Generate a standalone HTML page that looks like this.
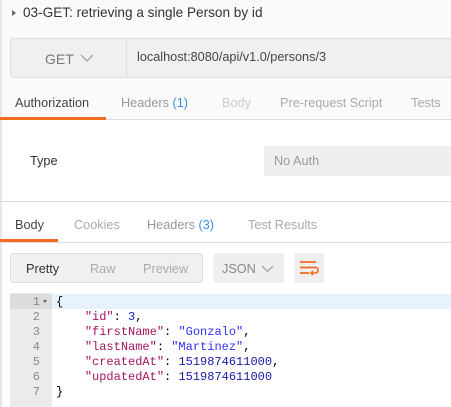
<!DOCTYPE html>
<html><head><style>
*{margin:0;padding:0;box-sizing:border-box}
body{width:451px;height:407px;overflow:hidden;background:#fff;font-family:"Liberation Sans",sans-serif;position:relative;color:#333}
.a{position:absolute;white-space:nowrap}
.mono{font-family:"Liberation Mono",monospace;font-size:12px}
</style></head><body>
<div class="a" style="left:0;top:0;width:451px;height:120px;background:#fafafa"></div>
<div class="a" style="left:0;top:0;width:2px;height:407px;background:#e6e6e6"></div>
<div class="a" style="left:12px;top:10px;width:0;height:0;border-left:4px solid #666;border-top:3.5px solid transparent;border-bottom:3.5px solid transparent"></div>
<div class="a" style="left:23px;top:5px;font-size:13.6px;color:#333">03-GET: retrieving a single Person by id</div>
<div class="a" style="left:10px;top:38px;width:445px;height:40px;background:#f0f0f0;border:1px solid #ddd;border-radius:3px"></div>
<div class="a" style="left:126px;top:39px;width:1px;height:38px;background:#ddd"></div>
<div class="a" style="left:45px;top:51px;font-size:14px;color:#777">GET</div>
<svg class="a" style="left:80px;top:54px" width="14" height="9"><path d="M1 1L7 7L13 1" stroke="#aaa" stroke-width="1.5" fill="none"/></svg>
<div class="a" style="left:137px;top:50px;font-size:12.7px;color:#444">localhost:8080/api/v1.0/persons/3</div>
<div class="a" style="left:15px;top:96px;font-size:12.7px;color:#444">Authorization</div>
<div class="a" style="left:121px;top:96px;font-size:12.7px;color:#999">Headers <span style="color:#3a8fe0">(1)</span></div>
<div class="a" style="left:222px;top:96px;font-size:12.7px;color:#ccc">Body</div>
<div class="a" style="left:280px;top:96px;font-size:12.7px;color:#aaa">Pre-request Script</div>
<div class="a" style="left:411px;top:96px;font-size:12.7px;color:#aaa">Tests</div>
<div class="a" style="left:0;top:119px;width:451px;height:1px;background:#ddd"></div>
<div class="a" style="left:0;top:117px;width:106px;height:3px;background:#f26b21"></div>
<div class="a" style="left:30px;top:154px;font-size:12.7px;color:#333">Type</div>
<div class="a" style="left:264px;top:146px;width:190px;height:30px;background:#efefef;border-radius:2px"></div>
<div class="a" style="left:274px;top:154px;font-size:12.7px;color:#999">No Auth</div>
<div class="a" style="left:0;top:201px;width:451px;height:1px;background:#ddd"></div>
<div class="a" style="left:15px;top:218px;font-size:12.7px;color:#444">Body</div>
<div class="a" style="left:74px;top:218px;font-size:12.7px;color:#aaa">Cookies</div>
<div class="a" style="left:147px;top:218px;font-size:12.7px;color:#999">Headers <span style="color:#3a8fe0">(3)</span></div>
<div class="a" style="left:248px;top:218px;font-size:12.7px;color:#aaa">Test Results</div>
<div class="a" style="left:0;top:242px;width:451px;height:1px;background:#ddd"></div>
<div class="a" style="left:0;top:239px;width:58px;height:3px;background:#f26b21"></div>
<div class="a" style="left:10px;top:253px;width:193px;height:30px;background:#f0f0f0;border:1px solid #ddd;border-radius:3px"></div>
<div class="a" style="left:26px;top:262px;font-size:12.7px;color:#333">Pretty</div>
<div class="a" style="left:90px;top:262px;font-size:12.7px;color:#aaa">Raw</div>
<div class="a" style="left:143px;top:262px;font-size:12.7px;color:#aaa">Preview</div>
<div class="a" style="left:213px;top:253px;width:71px;height:30px;background:#efefef;border-radius:3px"></div>
<div class="a" style="left:222px;top:262px;font-size:12.7px;color:#888">JSON</div>
<svg class="a" style="left:261px;top:265px" width="13" height="8"><path d="M1 1L6.5 6.5L12 1" stroke="#aaa" stroke-width="1.5" fill="none"/></svg>
<div class="a" style="left:294px;top:253px;width:30px;height:30px;background:#efefef;border-radius:3px"></div>
<svg class="a" style="left:298px;top:260px" width="22" height="17"><path d="M2 2H18M2 7.5H18M2 13H11" stroke="#f26b21" stroke-width="1.8" fill="none"/><path d="M18 7.5Q20 7.5 20 10.2Q20 13 17 13H13M15 11L13 13L15 15" stroke="#f26b21" stroke-width="1.6" fill="none"/></svg>
<div class="a" style="left:10px;top:293px;width:42px;height:114px;background:#ebebeb"></div>
<div class="a" style="left:10px;top:294px;width:42px;height:15px;background:#dcdcdc"></div>
<div class="a" style="left:52px;top:294px;width:399px;height:15px;background:#e8f2fc"></div>
<div class="a mono" style="left:10px;top:295px;width:30px;text-align:right;color:#888;line-height:15px">1<br>2<br>3<br>4<br>5<br>6<br>7</div>
<div class="a" style="left:43px;top:300px;width:0;height:0;border-top:3px solid #666;border-left:2.5px solid transparent;border-right:2.5px solid transparent"></div>
<div class="a mono" style="left:56px;top:295px;line-height:15px;color:#000;white-space:pre">{
    <span style="color:#a31560">"id"</span>: <span style="color:#1a1aa6">3</span>,
    <span style="color:#a31560">"firstName"</span>: <span style="color:#3030ff">"Gonzalo"</span>,
    <span style="color:#a31560">"lastName"</span>: <span style="color:#3030ff">"Martinez"</span>,
    <span style="color:#a31560">"createdAt"</span>: <span style="color:#1a1aa6">1519874611000</span>,
    <span style="color:#a31560">"updatedAt"</span>: <span style="color:#1a1aa6">1519874611000</span>
}</div>
</body></html>
